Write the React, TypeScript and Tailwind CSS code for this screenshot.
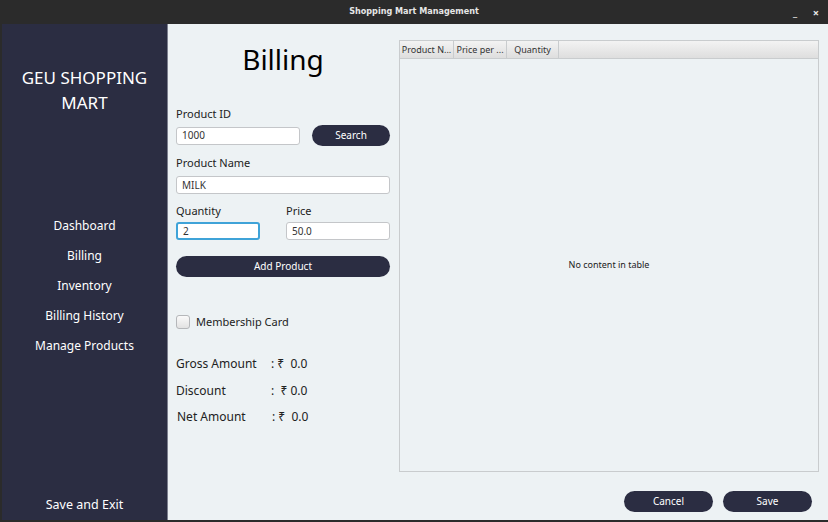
import React from "react";

const navItems = ["Dashboard", "Billing", "Inventory", "Billing History", "Manage Products"];

const totals = [
  { label: "Gross Amount", value: ": ₹  0.0", mt: "mt-[27px]", pl: "pl-0" },
  { label: "Discount", value: ":  ₹ 0.0", mt: "mt-[11px]", pl: "pl-0" },
  { label: "Net Amount", value: ": ₹  0.0", mt: "mt-[10px]", pl: "pl-px" },
];

function TextField({ value, focused, className }: { value: string; focused?: boolean; className?: string }) {
  return (
    <div
      className={`h-[18px] bg-white rounded-[3px] flex items-center px-[5px] text-[10px] text-[#333] ${
        focused ? "border-2 border-[#3fa3d8] px-[4px]" : "border border-[#c4c6c9]"
      } ${className ?? ""}`}
    >
      {value}
    </div>
  );
}

function PillButton({ label, className }: { label: string; className?: string }) {
  return (
    <button className={`h-[21px] rounded-full bg-[#2b2d42] text-white text-[10px] flex items-center justify-center ${className ?? ""}`}>
      {label}
    </button>
  );
}

export default function App() {
  return (
    <div className="w-[828px] h-[522px] flex flex-col overflow-hidden bg-[#2b2b2b]" style={{ fontFamily: '"Noto Sans", "Open Sans", sans-serif' }}>
      {/* Title bar */}
      <div className="h-[24px] shrink-0 flex items-center relative bg-[#2b2b2b] text-[#e6e6e6]">
        <div
          className="flex-1 text-center text-[9px] font-bold"
          style={{ fontFamily: '"DejaVu Sans Condensed", "DejaVu Sans", sans-serif' }}
        >
          Shopping Mart Management
        </div>
        <span className="absolute right-[31px] top-[5px] text-[10px] font-bold">_</span>
        <span className="absolute right-[9px] top-[5px] text-[11px] font-bold">×</span>
      </div>

      {/* Body */}
      <div className="flex-1 flex pl-[2px] pb-[2px]">
        {/* Sidebar */}
        <div className="w-[166px] shrink-0 bg-[#2b2d42] border-r border-[#7c7f8e] flex flex-col items-center text-white">
          <div className="mt-[41px] text-[17px] leading-[25px] text-center">
            GEU SHOPPING
            <br />
            MART
          </div>
          <div className="mt-[102px] flex flex-col items-center gap-[13px] text-[12px] leading-[17px]">
            {navItems.map((item) => (
              <div key={item}>{item}</div>
            ))}
          </div>
          <div className="mt-auto mb-[7px] text-[12.5px] leading-[17px]">Save and Exit</div>
        </div>

        {/* Content */}
        <div className="flex-1 bg-[#edf2f4] flex flex-col">
          <div className="flex pt-[16px] pl-[8px] pr-[9px] gap-[9px]">
            {/* Form column */}
            <div className="w-[214px] flex flex-col text-[#222]">
              <div className="h-[40px] leading-[38px] text-center text-[28px] text-black">Billing</div>

              <div className="mt-[26px] h-[16px] leading-[16px] text-[11px]">Product ID</div>
              <div className="mt-[3px] flex items-center h-[21px]">
                <TextField value="1000" className="w-[124px]" />
                <PillButton label="Search" className="ml-[12px] w-[78px]" />
              </div>

              <div className="mt-[9px] h-[16px] leading-[16px] text-[11px]">Product Name</div>
              <TextField value="MILK" className="mt-[5px]" />

              <div className="mt-[9px] h-[16px] leading-[16px] text-[11px] flex">
                <span className="w-[110px]">Quantity</span>
                <span>Price</span>
              </div>
              <div className="mt-[3px] flex">
                <TextField value="2" focused className="w-[84px]" />
                <TextField value="50.0" className="ml-[26px] w-[104px]" />
              </div>

              <PillButton label="Add Product" className="mt-[16px] w-full" />

              <div className="mt-[38px] flex items-center h-[14px]">
                <div className="w-[14px] h-[14px] rounded-[3px] border border-[#b5b7ba] bg-gradient-to-b from-[#fafafa] to-[#e2e2e2]" />
                <span className="ml-[6px] text-[11px]">Membership Card</span>
              </div>

              {totals.map((t) => (
                <div key={t.label} className={`${t.mt} h-[16px] leading-[16px] text-[12px] flex ${t.pl}`}>
                  <span className="w-[95px]">{t.label}</span>
                  <span className="whitespace-pre">{t.value}</span>
                </div>
              ))}
            </div>

            {/* Table */}
            <div className="flex-1 h-[432px] border border-[#c9ccce] bg-[#edf2f4] flex flex-col">
              <div className="h-[18px] flex border-b border-[#c9ccce] bg-gradient-to-b from-[#f3f3f3] to-[#dedede] text-[9px] text-[#333]">
                <div className="w-[54px] border-r border-[#c9ccce] flex items-center justify-center">Product N...</div>
                <div className="w-[53px] border-r border-[#c9ccce] flex items-center justify-center">Price per ...</div>
                <div className="w-[52px] border-r border-[#c9ccce] flex items-center justify-center">Quantity</div>
                <div className="flex-1" />
              </div>
              <div className="flex-1 flex items-center justify-center text-[9px] text-[#222]">No content in table</div>
            </div>
          </div>

          <div className="mt-[19px] flex justify-end gap-[10px] pr-[16px]">
            <PillButton label="Cancel" className="w-[89px]" />
            <PillButton label="Save" className="w-[89px]" />
          </div>
        </div>
      </div>
    </div>
  );
}
